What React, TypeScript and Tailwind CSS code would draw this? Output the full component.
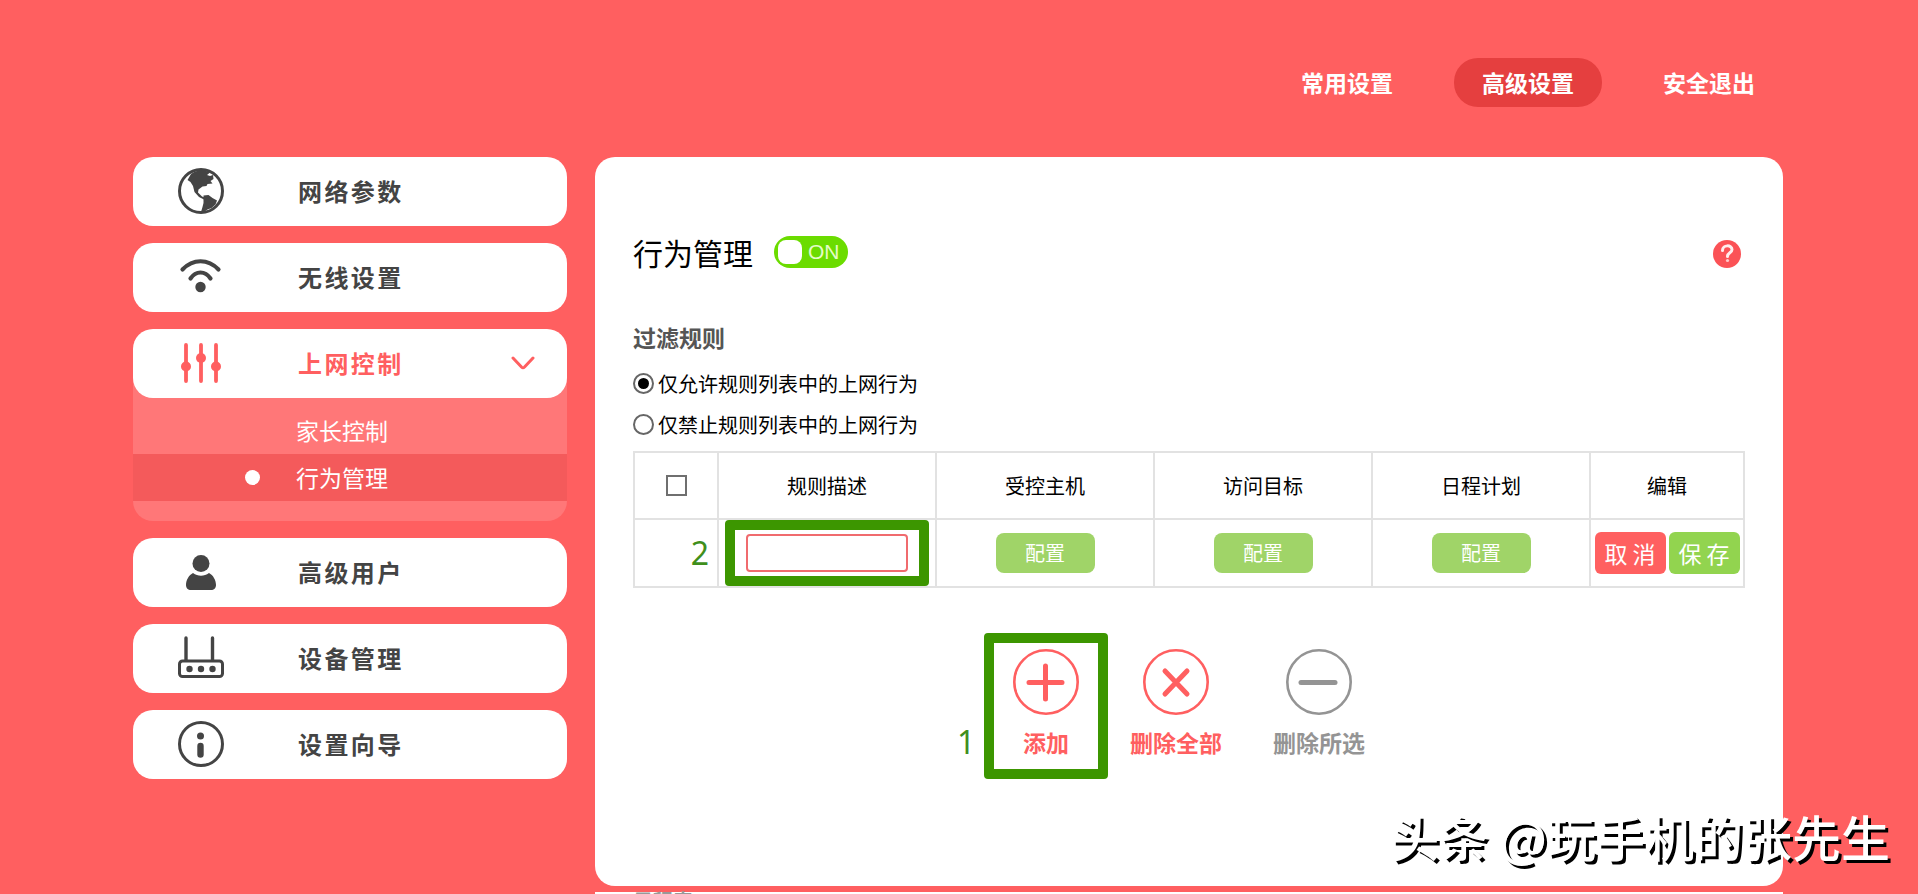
import React, { useState } from 'react';

const RED = '#ff5f60';

const GlobeIcon = () => (
  <svg width='46' height='46' viewBox='0 0 46 46' fill='none'>
    <circle cx='23' cy='23' r='21.500' stroke='#444' strokeWidth='3' />
    <path
      d='M13 6C18 2 26 1.500 32 4.500l-3 2.500 3 1 3-1 .5 4-3 2 2 2.500-5 .5-1 2-4 .5-4 3-.5 3 4 4 4 1.500-2 1.500-5-2.500-4.500-5-1.500-6-2.500-4-3-2z'
      fill='#444'
    />
    <path d='M25.500 27.500l5-.5 4 3 4.500 2.500-1.500 4-4 3.500-4 1.500-5 3.500-1.500-1 1.500-5 1-4z' fill='#444' />
  </svg>
);

const WifiIcon = () => (
  <svg width='46' height='46' viewBox='0 0 46 46' fill='none' stroke='#444' strokeLinecap='round'>
    <path d='M4.500 15.500C15 4.500 30 4.500 40.500 15.500' strokeWidth='4.200' />
    <path d='M12.500 24.500C18 16.500 27 16.500 32.500 24.500' strokeWidth='4.200' />
    <circle cx='22.500' cy='33' r='5.200' fill='#444' stroke='none' />
  </svg>
);

const SlidersIcon = () => (
  <svg width='46' height='46' viewBox='0 0 46 46' fill={RED} stroke={RED} strokeLinecap='round'>
    <path d='M8 5v36M23 5v36M38 5v36' strokeWidth='3.800' />
    <circle cx='8' cy='26.500' r='5' stroke='none' />
    <circle cx='23' cy='18' r='5' stroke='none' />
    <circle cx='38' cy='26.500' r='5' stroke='none' />
  </svg>
);

const UserIcon = () => (
  <svg width='46' height='46' viewBox='0 0 46 46' fill='#444'>
    <circle cx='23' cy='14.500' r='8.500' />
    <path d='M15 24c5 3.500 11 3.500 16 0 4 2 7 7 7 12 0 3-2 5-5 5H13c-3 0-5-2-5-5 0-5 3-10 7-12z' />
  </svg>
);

const RouterIcon = () => (
  <svg width='46' height='46' viewBox='0 0 46 46' fill='none' stroke='#444' strokeLinecap='round'>
    <path d='M8 3v22M34.500 3v22' strokeWidth='3.400' />
    <rect x='1.500' y='26' width='43' height='15.500' rx='3' strokeWidth='3' />
    <g fill='#444' stroke='none'>
      <circle cx='11.500' cy='34' r='3.200' />
      <circle cx='23' cy='34' r='3.200' />
      <circle cx='34.500' cy='34' r='3.200' />
    </g>
  </svg>
);

const InfoIcon = () => (
  <svg width='46' height='46' viewBox='0 0 46 46' fill='none'>
    <circle cx='23' cy='23' r='21.500' stroke='#444' strokeWidth='3' />
    <circle cx='22.500' cy='15' r='3.500' fill='#444' />
    <path d='M22.500 25v8.500' stroke='#444' strokeWidth='6.400' strokeLinecap='round' />
  </svg>
);

const menuTop = [
  { label: '网络参数', icon: <GlobeIcon /> },
  { label: '无线设置', icon: <WifiIcon /> },
];

const menuBottom = [
  { label: '高级用户', icon: <UserIcon /> },
  { label: '设备管理', icon: <RouterIcon /> },
  { label: '设置向导', icon: <InfoIcon /> },
];

type MenuItemProps = {
  label: string;
  icon: React.ReactNode;
  active?: boolean;
};

const MenuItem: React.FC<MenuItemProps> = ({ label, icon, active }) => (
  <button
    type='button'
    className={`relative flex h-[69px] w-full items-center rounded-[20px] bg-white pb-0.5 pl-[45px] pr-8 text-left text-2xl font-bold tracking-widest ${
      active ? 'text-[#ff5f60]' : 'text-[#444]'
    }`}
  >
    {icon}
    <span className='ml-[74px] flex-1'>{label}</span>
    {active && (
      <svg width='24' height='14' viewBox='0 0 24 14' fill='none' stroke={RED} strokeWidth='3' strokeLinecap='round' strokeLinejoin='round'>
        <path d='M2 2l8.500 9q1.500 1.500 3 0L22 2' />
      </svg>
    )}
  </button>
);

const actions = [
  { label: '添加', color: 'text-[#ff5f60]', path: 'M32.500 17v33M16 33.500h33' },
  { label: '删除全部', color: 'text-[#ff5f60]', path: 'M22 22l22 23M44 22L22 45' },
  { label: '删除所选', color: 'text-[#949494]', path: 'M15 33.500h34' },
];

const App: React.FC = () => {
  const [mode, setMode] = useState('allow');
  const [desc, setDesc] = useState('');

  return (
    <div className="relative flex h-screen flex-col overflow-hidden bg-[#ff5f60] pl-[133px] pr-[135px] font-['Noto_Sans_CJK_SC',sans-serif]">
      {/* 顶部导航 */}
      <nav className='flex h-[157px] shrink-0 items-start justify-end pt-[58px] text-[23px] font-bold leading-[49px] text-white'>
        <a href='#basic' className='px-7'>常用设置</a>
        <a href='#advanced' className='mx-[33px] rounded-3xl bg-[#e53f3f] px-7'>高级设置</a>
        <a href='#logout' className='px-7'>安全退出</a>
      </nav>

      <div className='flex shrink-0 items-start gap-7'>
        {/* 左侧菜单 */}
        <aside className='flex w-[434px] shrink-0 flex-col gap-[17px]'>
          {menuTop.map((item) => (
            <MenuItem key={item.label} {...item} />
          ))}
          <div>
            <MenuItem label='上网控制' icon={<SlidersIcon />} active />
            <div className='-mt-5 rounded-b-[20px] bg-[#ff7778] pb-5 pt-[29px] text-[23px] leading-[47px] text-white'>
              <a href='#parent' className='block pl-[163px]'>家长控制</a>
              <a href='#behavior' className='flex items-center bg-[#f45a5b] pl-28'>
                <span className='mr-9 size-[15px] rounded-full bg-white' />
                行为管理
              </a>
            </div>
          </div>
          {menuBottom.map((item) => (
            <MenuItem key={item.label} {...item} />
          ))}
        </aside>

        {/* 右侧内容 */}
        <main className='min-w-0 flex-1'>
          <section className='min-h-[729px] rounded-[20px] bg-white px-[38px] pt-[72px] text-xl'>
            <div className='flex h-[46px] items-center'>
              <h1 className='text-[30px] text-black'>行为管理</h1>
              <button
                type='button'
                role='switch'
                aria-checked='true'
                aria-label='行为管理'
                className='ml-[21px] flex h-8 w-[74px] items-center gap-1.5 rounded-full bg-[#6bdc00] pl-1'
              >
                <span className='size-6 rounded-lg bg-white' />
                <span className="font-['Liberation_Sans',sans-serif] text-[21px] leading-8 text-[#e4fbc8]">ON</span>
              </button>
              <button type='button' aria-label='帮助' className='ml-auto mr-1 pt-1'>
                <svg width='28' height='28' viewBox='0 0 28 28' fill='none'>
                  <circle cx='14' cy='14' r='14' fill='#fb5256' />
                  <path d='M9.500 10.500c0-6 9.500-6 9.500-1 0 3.500-4.500 3-4.500 7' stroke='#ffeeee' strokeWidth='3' strokeLinecap='round' />
                  <circle cx='14.500' cy='20.500' r='1.600' fill='#ffc9ca' />
                </svg>
              </button>
            </div>

            <h2 className='mt-[45px] text-[23px] font-bold leading-[34px] text-[#555]'>过滤规则</h2>
            <div className='mt-[9px] text-black'>
              <label className='flex h-[41px] items-center gap-1'>
                <input
                  type='radio'
                  name='mode'
                  checked={mode === 'allow'}
                  onChange={() => setMode('allow')}
                  className='size-[21px] appearance-none rounded-full border-2 border-[#666] bg-clip-content p-[3px] checked:bg-black'
                />
                仅允许规则列表中的上网行为
              </label>
              <label className='flex h-[41px] items-center gap-1'>
                <input
                  type='radio'
                  name='mode'
                  checked={mode === 'deny'}
                  onChange={() => setMode('deny')}
                  className='size-[21px] appearance-none rounded-full border-2 border-[#666] bg-clip-content p-[3px] checked:bg-black'
                />
                仅禁止规则列表中的上网行为
              </label>
            </div>

            <table className='mt-1.5 w-full table-fixed border-collapse text-center text-black [&_td]:border-2 [&_td]:border-[#e2e2e2] [&_th]:border-2 [&_th]:border-[#e2e2e2] [&_th]:font-normal'>
              <colgroup>
                <col className='w-[84px]' />
                <col />
                <col />
                <col />
                <col />
                <col className='w-[154px]' />
              </colgroup>
              <thead>
                <tr className='h-[67px]'>
                  <th>
                    <input type='checkbox' aria-label='全选' className='block mx-auto size-[21px] appearance-none border-2 border-[#6f6f6f]' />
                  </th>
                  <th>规则描述</th>
                  <th>受控主机</th>
                  <th>访问目标</th>
                  <th>日程计划</th>
                  <th>编辑</th>
                </tr>
              </thead>
              <tbody>
                <tr className='h-[68px]'>
                  <td className="pr-2 text-right font-['Noto_Sans',sans-serif] text-[32px] leading-10 text-[#3f8f1c]">2</td>
                  <td>
                    <div className='relative mx-auto w-[162px]'>
                      <input
                        type='text'
                        aria-label='规则描述'
                        value={desc}
                        onChange={(e) => setDesc(e.target.value)}
                        className='block h-[38px] w-full rounded border-2 border-[#f06b6e] px-2 outline-none'
                      />
                      <div className='pointer-events-none absolute -inset-x-[21px] -inset-y-3.5 rounded border-[10px] border-[#3c9600]' />
                    </div>
                  </td>
                  {['主机', '目标', '计划'].map((name) => (
                    <td key={name}>
                      <button type='button' className='block mx-auto h-10 w-[99px] rounded-lg bg-[#a0d468] text-white'>配置</button>
                    </td>
                  ))}
                  <td>
                    <div className='flex justify-center gap-[3px] text-[23px] text-white'>
                      <button type='button' className='h-[42px] w-[71px] rounded-md bg-[#ff6060]'>取 消</button>
                      <button type='button' className='h-[42px] w-[71px] rounded-md bg-[#92d44f]'>保 存</button>
                    </div>
                  </td>
                </tr>
              </tbody>
            </table>

            <div className='mt-[61px] flex justify-center gap-[51px] text-[23px] font-bold leading-[34px]'>
              {actions.map((item) => (
                <button key={item.label} type='button' className={`relative flex flex-col items-center gap-2.5 ${item.color}`}>
                  <svg width='66' height='66' viewBox='0 0 66 66' fill='none' stroke='currentColor' strokeLinecap='round'>
                    <circle cx='33' cy='33' r='31.700' strokeWidth='2.600' />
                    <path d={item.path} strokeWidth='5' />
                  </svg>
                  {item.label}
                  {item.label === '添加' && (
                    <>
                      <span className='pointer-events-none absolute -inset-x-[29px] -bottom-5 -top-4 rounded border-[10px] border-[#3c9600]' />
                      <span className="absolute -left-14 bottom-0 font-['Noto_Sans',sans-serif] text-[32px] font-normal text-[#3f8f1c]">1</span>
                    </>
                  )}
                </button>
              ))}
            </div>
          </section>

          <section className='mt-1.5 h-20 bg-white pl-[38px] text-xl font-bold leading-[18px] text-[#999]'>日程表</section>
        </main>
      </div>

      {/* 水印 */}
      <div className='pointer-events-none absolute bottom-[22px] right-7 text-[49px] font-medium leading-[72px] text-white [text-shadow:3px_3px_0_#000]'>
        头条 @玩手机的张先生
      </div>
    </div>
  );
};

export default App;
